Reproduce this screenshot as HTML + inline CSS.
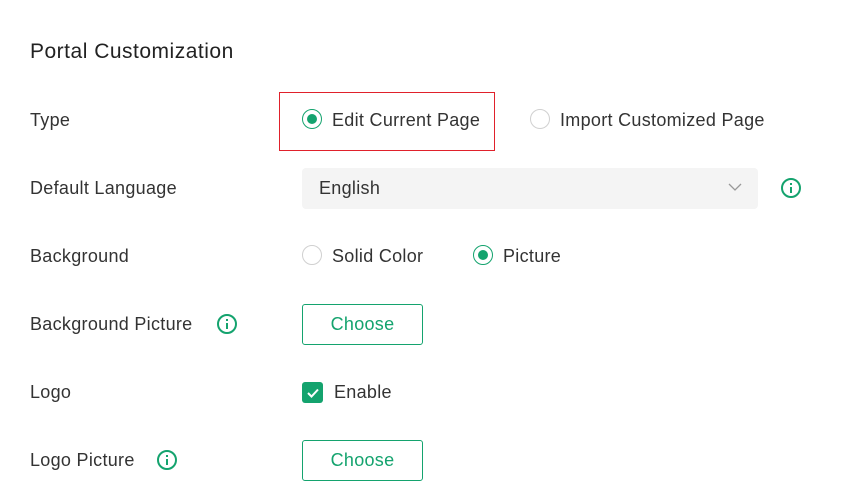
<!DOCTYPE html>
<html><head><style>
body{margin:0;width:865px;height:503px;background:#fff;font-family:"Liberation Sans",sans-serif;color:#333;position:relative;overflow:hidden}
.a{position:absolute;white-space:nowrap}
.t{font-size:18px;line-height:20px;letter-spacing:0.3px}
.radio{position:absolute;width:18px;height:18px;border:1.5px solid #d0d0d0;border-radius:50%;box-sizing:content-box}
.radio.on{border-color:#14a36e}
.radio.on::after{content:"";position:absolute;left:4px;top:4px;width:10px;height:10px;border-radius:50%;background:#14a36e}
.info{position:absolute;width:16px;height:16px;border:2px solid #14a36e;border-radius:50%}
.info::before{content:"";position:absolute;left:7px;top:3px;width:2px;height:2px;background:#14a36e}
.info::after{content:"";position:absolute;left:7px;top:7px;width:2px;height:6px;background:#14a36e}
.btn{position:absolute;left:302px;width:119px;height:39px;border:1px solid #14a36e;border-radius:3px;color:#14a36e;font-size:18px;letter-spacing:0.3px;line-height:39px;text-align:center}
</style></head><body>
<div class="a" style="left:30px;top:40px;font-size:21px;letter-spacing:0.5px;line-height:24px;color:#222">Portal Customization</div>

<div class="a t" style="left:30px;top:110px">Type</div>
<div class="a" style="left:279px;top:92px;width:214px;height:57px;border:1.5px solid #e0212b"></div>
<div class="radio on" style="left:302px;top:109px"></div>
<div class="a t" style="left:332px;top:110px">Edit Current Page</div>
<div class="radio" style="left:530px;top:109px"></div>
<div class="a t" style="left:560px;top:110px">Import Customized Page</div>

<div class="a t" style="left:30px;top:178px">Default Language</div>
<div class="a" style="left:302px;top:168px;width:456px;height:41px;background:#f4f4f4;border-radius:4px"></div>
<div class="a t" style="left:319px;top:178px">English</div>
<svg class="a" style="left:728px;top:182px" width="14" height="10"><path d="M1 2 L7 8 L13 2" fill="none" stroke="#999" stroke-width="1.3"/></svg>
<div class="info" style="left:781px;top:178px"></div>

<div class="a t" style="left:30px;top:246px">Background</div>
<div class="radio" style="left:302px;top:245px"></div>
<div class="a t" style="left:332px;top:246px">Solid Color</div>
<div class="radio on" style="left:473px;top:245px"></div>
<div class="a t" style="left:503px;top:246px">Picture</div>

<div class="a t" style="left:30px;top:314px">Background Picture</div>
<div class="info" style="left:217px;top:314px"></div>
<div class="btn" style="top:304px">Choose</div>

<div class="a t" style="left:30px;top:382px">Logo</div>
<div class="a" style="left:302px;top:382px;width:21px;height:21px;background:#14a36e;border-radius:3px"></div>
<svg class="a" style="left:302px;top:382px" width="21" height="21"><path d="M6 11 L9.5 14.5 L16 7.5" fill="none" stroke="#fff" stroke-width="2"/></svg>
<div class="a t" style="left:334px;top:382px">Enable</div>

<div class="a t" style="left:30px;top:450px">Logo Picture</div>
<div class="info" style="left:157px;top:450px"></div>
<div class="btn" style="top:440px">Choose</div>
</body></html>
